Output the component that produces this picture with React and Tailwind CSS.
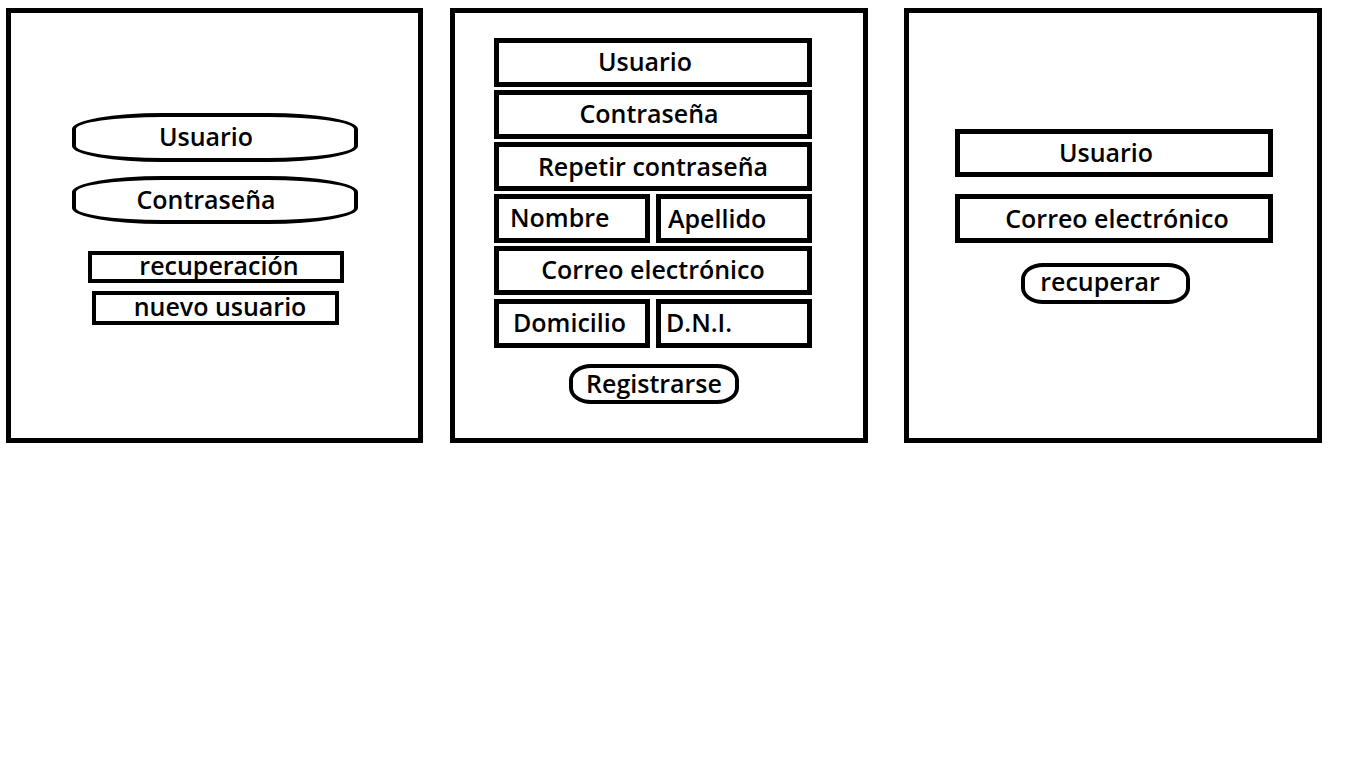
import React from 'react';

const font = { fontFamily: '"Open Sans", "Noto Sans", sans-serif' };

// caja rectangular del boceto
const Campo = ({ children, className = '' }) => (
  <div className={`flex items-center border-[5px] border-black text-[25px] font-semibold leading-none text-black ${className}`}>
    {children}
  </div>
);

const Panel = ({ children, className = '' }) => (
  <div className={`flex h-[435px] flex-col border-[5px] border-black bg-white ${className}`}>
    {children}
  </div>
);

export default function App() {
  return (
    <div className="flex h-[768px] w-[1366px] items-start bg-white pt-[8px] pl-[6px]" style={font}>
      {/* Login */}
      <Panel className="w-[417px]">
        <div className="mt-[100px] ml-[61px] flex h-[49px] w-[286px] items-center justify-center rounded-[90px/16px] border-[4px] border-black pr-[18px] pb-[3px] text-[25px] font-semibold leading-none">
          Usuario
        </div>
        <div className="mt-[14px] ml-[61px] flex h-[48px] w-[286px] items-center justify-center rounded-[90px/16px] border-[4px] border-black pr-[18px] pb-[2px] text-[25px] font-semibold leading-none">
          Contraseña
        </div>
        <div className="mt-[27px] ml-[77px] flex h-[32px] w-[256px] items-center justify-center border-[4px] border-black pl-[6px] pb-[4px] text-[25px] font-semibold leading-none">
          recuperación
        </div>
        <div className="mt-[8px] ml-[81px] flex h-[34px] w-[247px] items-center justify-center border-[4px] border-black pl-[9px] pb-[4px] text-[25px] font-semibold leading-none">
          nuevo usuario
        </div>
      </Panel>

      {/* Registro */}
      <Panel className="ml-[27px] w-[418px]">
        <div className="mt-[25px] ml-[39px] flex w-[318px] flex-col gap-[3px]">
          <Campo className="h-[49px] justify-center pr-[16px] pb-[2px]">Usuario</Campo>
          <Campo className="h-[49px] justify-center pr-[8px] pb-[2px]">Contraseña</Campo>
          <Campo className="h-[49px] justify-center">Repetir contraseña</Campo>
          <div className="flex gap-[6px]">
            <Campo className="h-[49px] w-[156px] pl-[11px] pb-[2px]">Nombre</Campo>
            <Campo className="h-[49px] w-[156px] pl-[7px]">Apellido</Campo>
          </div>
          <Campo className="h-[49px] justify-center pb-[2px]">Correo electrónico</Campo>
          <div className="mt-[1px] flex gap-[6px]">
            <Campo className="h-[49px] w-[156px] pl-[14px] pb-[2px]">Domicilio</Campo>
            <Campo className="h-[49px] w-[156px] pl-[5px] pb-[2px]">D.N.I.</Campo>
          </div>
        </div>
        <div className="mt-[16px] ml-[114px] flex h-[40px] w-[170px] items-center justify-center rounded-[22px/16px] border-[4px] border-black pb-[2px] text-[25px] font-semibold leading-none">
          Registrarse
        </div>
      </Panel>

      {/* Recuperación */}
      <Panel className="ml-[36px] w-[418px]">
        <Campo className="mt-[116px] ml-[46px] h-[48px] w-[318px] justify-center pr-[16px] pb-[2px]">Usuario</Campo>
        <Campo className="mt-[17px] ml-[46px] h-[49px] w-[318px] justify-center pl-[6px]">Correo electrónico</Campo>
        <div className="mt-[20px] ml-[112px] flex h-[41px] w-[169px] items-center justify-center rounded-[22px/16px] border-[4px] border-black pr-[11px] pb-[5px] text-[25px] font-semibold leading-none">
          recuperar
        </div>
      </Panel>
    </div>
  );
}
